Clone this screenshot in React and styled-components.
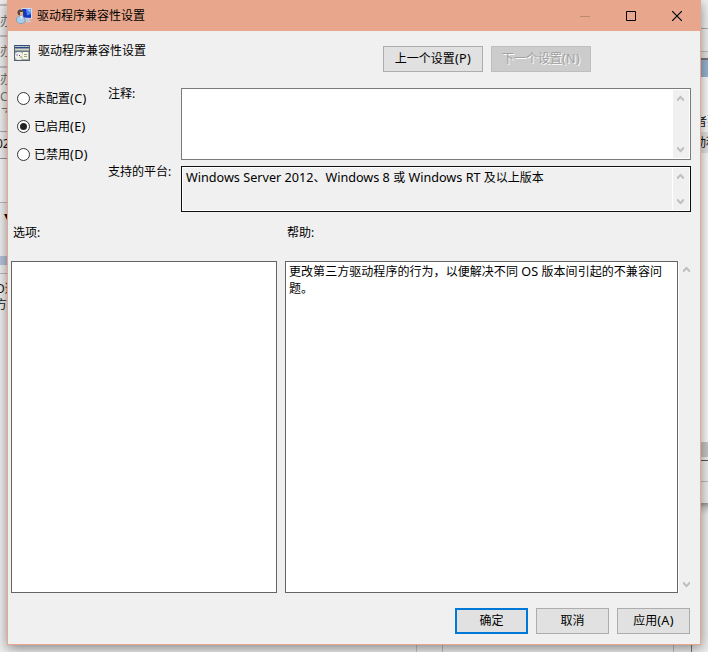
import React from "react";
import styled, { createGlobalStyle } from "styled-components";

const GlobalStyle = createGlobalStyle`
  * {
    box-sizing: border-box;
  }

  body {
    margin: 0;
    overflow: hidden;
    font-family: "Noto Sans", "Noto Sans CJK SC", sans-serif;
    font-size: 12px;
    line-height: 17px;
    color: #000;
    background: #eee;
  }

  button {
    font: inherit;
  }
`;

const Desktop = styled.div`
  display: grid;
  grid-template-columns: 7px 694px 7px;
  grid-template-rows: 645px 7px;
  width: 708px;
  height: 652px;
  overflow: hidden;
`;

const Edge = styled.div`
  display: flex;
  flex-direction: column;
  overflow: hidden;
  background: #f0f0f0;
`;

/* A slice of the window that sits behind the dialog */
const Slice = styled.div`
  flex: none;
  height: ${({ $h }) => $h}px;
  padding-top: ${({ $top }) => $top || 0}px;
  overflow: hidden;
  white-space: nowrap;
  line-height: ${({ $line }) => $line || 17}px;
  text-indent: ${({ $shift }) => $shift || 0}px;
  color: ${({ $color }) => $color || "#111"};
  background: ${({ $bg }) => $bg || "#f0f0f0"};
`;

const BottomEdge = styled.div`
  grid-column: 1 / -1;
  display: flex;
  background: #eee;
`;

const BottomPane = styled.div`
  width: ${({ $w }) => $w}px;
  border-right: 1px solid ${({ $line }) => $line || "#bdbdbd"};
`;

const Dialog = styled.main`
  z-index: 1;
  display: flex;
  flex-direction: column;
  border: 1px solid #e8a78c;
  border-top: 0;
  background: #f0f0f0;
  box-shadow: 0 3px 12px rgba(0, 0, 0, 0.45);
`;

const TitleBar = styled.header`
  display: flex;
  align-items: center;
  height: 31px;
  flex: none;
  padding-left: 8px;
  background: #e8a78c;

  h1 {
    flex: 1;
    margin: 0 0 0 5px;
    font-size: 12px;
    font-weight: 400;
  }
`;

const WindowButton = styled.button`
  display: flex;
  align-items: center;
  justify-content: center;
  width: 46px;
  height: 31px;
  padding: 0;
  border: 0;
  background: none;
`;

const Heading = styled.section`
  display: flex;
  height: 57px;
  padding: 14px 0 0 6px;

  h2 {
    width: 345px;
    margin: -3px 0 0 8px;
    font-size: 12px;
    font-weight: 400;
  }

  svg {
    flex: none;
  }
`;

const Button = styled.button`
  flex: none;
  width: ${({ $w }) => $w || 73}px;
  height: 26px;
  padding: 0 0 1px;
  border: ${({ $primary }) => ($primary ? "2px solid #0078d7" : "1px solid #adadad")};
  background: #e1e1e1;
  color: #000;

  &:disabled {
    border-color: #bfbfbf;
    background: #ccc;
    color: #a0a0a0;
    text-shadow: 1px 1px 0 #fff;
  }
`;

/* Latin letters run a little wider than the Chinese text around them */
const Latin = styled.span`
  font-size: 12.64px;
  line-height: 1;
`;

const Hotkey = styled(Latin)`
  letter-spacing: 0.35px;
`;

const NavButtons = styled.div`
  display: flex;
  gap: 8px;
  height: 26px;
  margin-top: 1px;
`;

const Settings = styled.section`
  display: grid;
  grid-template-columns: 100px 73px 510px;
  height: 124px;
`;

const Radios = styled.div`
  display: flex;
  flex-direction: column;
  gap: 11px;
  padding: 2px 0 0 9px;
`;

const RadioLabel = styled.label`
  display: flex;
  align-items: center;
  gap: 4px;
  height: 17px;
`;

const RadioDot = styled.span`
  display: flex;
  align-items: center;
  justify-content: center;
  width: 13px;
  height: 13px;
  border: 1px solid #333;
  border-radius: 50%;
  background: #fff;

  &::after {
    content: "";
    width: 7px;
    height: 7px;
    border-radius: 50%;
    background: ${({ $checked }) => ($checked ? "#222" : "transparent")};
  }
`;

const FieldLabels = styled.div`
  display: flex;
  flex-direction: column;
  gap: 61px;

  span {
    margin-top: -3px;
    margin-bottom: 3px;
  }
`;

const Fields = styled.div`
  display: flex;
  flex-direction: column;
  gap: 6px;
`;

const Field = styled.div`
  display: flex;
  justify-content: space-between;
  height: ${({ $h }) => $h}px;
  padding: 1px;
  border: 1px solid ${({ $readOnly }) => ($readOnly ? "#111" : "#7a7a7a")};
  outline: ${({ $readOnly }) => ($readOnly ? "1px solid #fff" : "none")};
  outline-offset: -2px;
  background: ${({ $readOnly }) => ($readOnly ? "#f0f0f0" : "#fff")};

  p {
    margin: 1px 0 0 3px;
    white-space: nowrap;
  }
`;

const ScrollTrack = styled.div`
  display: flex;
  flex-direction: column;
  align-items: center;
  justify-content: space-between;
  flex: none;
  width: ${({ $divider }) => ($divider ? 17 : 16)}px;
  padding: 5px 2px 5px 0;
  border-left: ${({ $divider }) => ($divider ? "1px solid #fff" : "0")};
  background: #f0f0f0;
`;

const PanelLabels = styled.div`
  display: flex;
  height: 49px;
  padding: 12px 0 0 5px;

  span {
    width: 274px;
  }
`;

const Panels = styled.section`
  display: flex;
  height: 332px;
  padding-left: 3px;
`;

const Panel = styled.div`
  width: ${({ $w }) => $w}px;
  margin-right: ${({ $gap }) => $gap || 0}px;
  padding: 1px 3px;
  border: 1px solid #646464;
  background: #fff;

  p {
    margin: 0;
    letter-spacing: 0.05px;
    white-space: nowrap;
  }
`;

const Footer = styled.footer`
  display: flex;
  justify-content: flex-end;
  gap: 8px;
  padding: 15px 10px 0 0;
`;

const ComputerIcon = () => (
  <svg width="16" height="16" viewBox="0 0 16 16">
    <path d="M8 11h5l2.5 3-5 .5z" fill="#c3c9d2" />
    <path d="M5.5.5h10v10l-8.5-.5z" fill="#1236c0" stroke="#d8dce8" />
    <path d="M10 1h5v5l-4 1.5z" fill="#4f86ee" />
    <path d="M11 1.5h3.5v3z" fill="#a8c8fa" />
    <circle cx="4.5" cy="4.5" r="3" fill="#5c4637" />
    <path d="M4 4h3v4H4z" fill="#e0b48c" />
    <path d="M.5 13v-3L3 8h3l3 3v3l-3 1.5H3z" fill="#a9cfe8" stroke="#6e98b9" strokeWidth=".7" />
    <path d="m4 8 1.5 3L7 8.5z" fill="#eef6fb" />
  </svg>
);

const PolicyIcon = () => (
  <svg width="16" height="16" viewBox="0 0 16 16" shapeRendering="crispEdges">
    <path fill="#a3adb0" d="M0 0h16v16H0z" />
    <path fill="#344a78" d="M0 0h16v1H0z" />
    <path fill="#b9d3cc" d="M1 1h6v1H1zM8 1h2v1H8zM11 1h2v1h-2zM14 1h1v1h-1z" />
    <path fill="#2d4589" d="M1 2h14v1H1z" />
    <path fill="#8e99a8" d="M1 3h14v1H1z" />
    <path fill="#d3d6cf" d="M1 4h14v1H1z" />
    <path fill="#9aa39c" d="M1 5h14v1H1z" />
    <path fill="#66788b" d="M0 6h16v1H0z" />
    <path fill="#596169" d="M0 0h1v16H0zM15 0h1v16h-1zM0 15h16v1H0z" />
    <circle cx="5" cy="11" r="4" fill="#eef0ec" shapeRendering="auto" />
    <path fill="#cfb4d8" d="M2 9h2v2H2z" />
    <path fill="#a9cc98" d="M6 11h2v2H6z" />
    <path fill="#555" d="M5 10h1v1H5z" />
    <path fill="#faf6df" d="M9 7h5v7H9z" />
    <path fill="#a49f83" d="M10 9h3v1h-3zM10 11h3v1h-3z" />
  </svg>
);

const Chevron = ({ down }) => (
  <svg width="7" height="7" viewBox="0 0 7 7">
    <path
      d={down ? "M0 1h1l2.5 2.5L6 1h1v2L3.5 6.5 0 3z" : "M0 6h1l2.500-2.500L6 6h1V4L3.500.5 0 4z"}
      fill="#bfbfbf"
    />
  </svg>
);

const Scrollbar = ({ divider }) => (
  <ScrollTrack $divider={divider}>
    <Chevron />
    <Chevron down />
  </ScrollTrack>
);

const options = [
  { label: "未配置", hotkey: "(C)" },
  { label: "已启用", hotkey: "(E)", checked: true },
  { label: "已禁用", hotkey: "(D)" },
];

const leftSlices = [
  { h: 4 },
  { h: 2, bg: "#c2c2c2" },
  { h: 29, text: "办", top: 7, color: "#777" },
  { h: 2, bg: "#c2c2c2" },
  { h: 29, text: "办", top: 6, color: "#777" },
  { h: 2, bg: "#c2c2c2" },
  { h: 20, text: "办", top: 3, color: "#777" },
  { h: 18, text: "C", color: "#777" },
  { h: 7, text: "子", line: 15, color: "#777" },
  { h: 18 },
  { h: 1, bg: "#aaa" },
  { h: 26, text: "02", top: 3, shift: -4 },
  { h: 1, bg: "#999" },
  { h: 43, bg: "#f8f8f8" },
  { h: 1, bg: "#bbb" },
  { h: 53, text: "▾", top: 4, shift: 4 },
  { h: 9, bg: "#b7c3dc" },
  { h: 8 },
  { h: 1, bg: "#bbb" },
  { h: 22, text: "D适", top: 6, shift: -4 },
  { h: 25, text: "方", shift: -5 },
  { h: 324 },
];

const rightSlices = [
  { h: 28, bg: "#f0f0f0" },
  { h: 1, bg: "#aaa" },
  { h: 22, bg: "#f0f0f0" },
  { h: 1, bg: "#bbb" },
  { h: 6, bg: "#e6e6e6" },
  { h: 2, bg: "#777" },
  { h: 17, bg: "#99b4d1" },
  { h: 36, bg: "#fbfbfb" },
  { h: 19, text: "者要", shift: -6, bg: "#fbfbfb" },
  { h: 21, text: "动程", top: 2, shift: -7, bg: "#e4e4e4" },
  { h: 289, bg: "#fbfbfb" },
  { h: 15, bg: "#c8c8c8" },
  { h: 3, bg: "#eee" },
  { h: 1, bg: "#555" },
  { h: 20, bg: "#eee" },
  { h: 1, bg: "#bbb" },
  { h: 21, bg: "#eee" },
  { h: 142, bg: "linear-gradient(#999, #d0d0d0 5px, #eee 12px)" },
];

const BehindWindow = ({ slices }) => (
  <Edge aria-hidden="true">
    {slices.map((s, i) => (
      <Slice
        key={i}
        $h={s.h}
        $top={s.top}
        $line={s.line}
        $shift={s.shift}
        $bg={s.bg}
        $color={s.color}
      >
        {s.text}
      </Slice>
    ))}
  </Edge>
);

const App = () => {
  return (
    <>
      <GlobalStyle />
      <Desktop>
        <BehindWindow slices={leftSlices} />
        <Dialog>
          <TitleBar>
            <ComputerIcon />
            <h1>驱动程序兼容性设置</h1>
            <WindowButton disabled aria-label="最小化">
              <svg width="10" height="10">
                <path d="M0 5.5h10" stroke="#bd8973" />
              </svg>
            </WindowButton>
            <WindowButton aria-label="最大化">
              <svg width="10" height="10">
                <path d="M.5.5h9v9h-9z" fill="none" stroke="#000" />
              </svg>
            </WindowButton>
            <WindowButton aria-label="关闭">
              <svg width="10" height="10">
                <path d="m0 0 10 10M10 0 0 10" stroke="#000" strokeWidth="1.2" />
              </svg>
            </WindowButton>
          </TitleBar>
          <Heading>
            <PolicyIcon />
            <h2>驱动程序兼容性设置</h2>
            <NavButtons>
              <Button $w={100}>
                上一个设置<Hotkey>(P)</Hotkey>
              </Button>
              <Button $w={100} disabled>
                下一个设置<Hotkey>(N)</Hotkey>
              </Button>
            </NavButtons>
          </Heading>
          <Settings>
            <Radios>
              {options.map((option) => (
                <RadioLabel key={option.label}>
                  <RadioDot $checked={option.checked} />
                  <span>
                    {option.label}
                    <Hotkey>{option.hotkey}</Hotkey>
                  </span>
                </RadioLabel>
              ))}
            </Radios>
            <FieldLabels>
              <span>注释:</span>
              <span>支持的平台:</span>
            </FieldLabels>
            <Fields>
              <Field $h={72}>
                <span />
                <Scrollbar />
              </Field>
              <Field $h={46} $readOnly>
                <p>
                  <Latin>Windows Server 2012</Latin>、<Latin>Windows 8 </Latin>或
                  <Latin> Windows RT </Latin>及以上版本
                </p>
                <Scrollbar divider />
              </Field>
            </Fields>
          </Settings>
          <PanelLabels>
            <span>选项:</span>
            <span>帮助:</span>
          </PanelLabels>
          <Panels>
            <Panel $w={266} $gap={8} />
            <Panel $w={393}>
              <p>
                更改第三方驱动程序的行为，以便解决不同<Latin> OS </Latin>版本间引起的不兼容问
              </p>
              <p>题。</p>
            </Panel>
            <Scrollbar divider />
          </Panels>
          <Footer>
            <Button $primary>确定</Button>
            <Button>取消</Button>
            <Button>
              应用<Hotkey>(A)</Hotkey>
            </Button>
          </Footer>
        </Dialog>
        <BehindWindow slices={rightSlices} />
        <BottomEdge>
          <BottomPane $w={417} $line="#c5c5c5" />
          <BottomPane $w={26} />
          <BottomPane $w={231} />
          <BottomPane $w={18} $line="#777" />
        </BottomEdge>
      </Desktop>
    </>
  );
};

export default App;
